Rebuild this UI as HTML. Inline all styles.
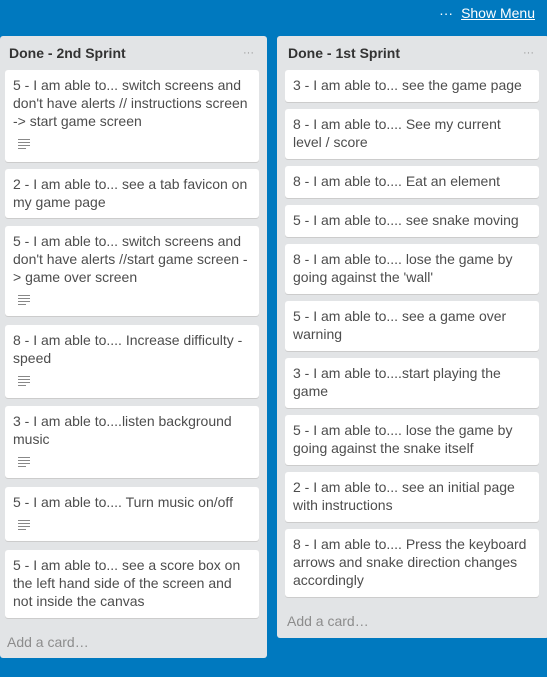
<!DOCTYPE html>
<html><head><meta charset="utf-8"><style>
body{margin:0;width:547px;height:677px;background:#0079bf;font-family:"Liberation Sans",Arial,sans-serif;position:relative;overflow:hidden}
.list{position:absolute;background:#e2e4e6;border-radius:3px}
.h{position:absolute;top:45px;font-weight:bold;font-size:14px;color:#333}
.dots{position:absolute;top:47px;color:#999;font-size:11px;letter-spacing:0}
.c{position:absolute;background:#fff;border-radius:3px;box-shadow:0 1px 0 #ccc;font-size:14px;line-height:18px;color:#4d4d4d;padding:6px 8px 0 8px;box-sizing:border-box}
.ic{display:block;margin:9px 0 0 5px;width:12px}
.ic i{display:block;height:1px;background:#888;margin-bottom:2px}
.add{position:absolute;color:#8c8c8c;font-size:14px}
</style></head><body>
<div style="position:absolute;right:12px;top:5px;color:#fff;font-size:14px"><span style="margin-right:8px">···</span><u>Show Menu</u></div>
<div class="list" style="left:0;top:36px;width:267px;height:622px"></div>
<div class="list" style="left:277px;top:36px;width:272px;height:602px"></div>
<div class="h" style="left:9px">Done - 2nd Sprint</div>
<div class="dots" style="left:243px">···</div>
<div class="h" style="left:288px">Done - 1st Sprint</div>
<div class="dots" style="left:523px">···</div>

<div class="c" style="left:5px;top:70px;width:254px;height:92px">5 - I am able to... switch screens and don't have alerts // instructions screen -&gt; start game screen<span class="ic"><i></i><i></i><i></i><i style="width:8px"></i></span></div>
<div class="c" style="left:5px;top:169px;width:254px;height:49px">2 - I am able to... see a tab favicon on my game page</div>
<div class="c" style="left:5px;top:226px;width:254px;height:90px">5 - I am able to... switch screens and don't have alerts //start game screen -&gt; game over screen<span class="ic"><i></i><i></i><i></i><i style="width:8px"></i></span></div>
<div class="c" style="left:5px;top:325px;width:254px;height:73px">8 - I am able to.... Increase difficulty - speed<span class="ic"><i></i><i></i><i></i><i style="width:8px"></i></span></div>
<div class="c" style="left:5px;top:406px;width:254px;height:72px">3 - I am able to....listen background music<span class="ic"><i></i><i></i><i></i><i style="width:8px"></i></span></div>
<div class="c" style="left:5px;top:487px;width:254px;height:54px">5 - I am able to.... Turn music on/off<span class="ic"><i></i><i></i><i></i><i style="width:8px"></i></span></div>
<div class="c" style="left:5px;top:550px;width:254px;height:68px">5 - I am able to... see a score box on the left hand side of the screen and not inside the canvas</div>
<div class="add" style="left:7px;top:634px">Add a card…</div>

<div class="c" style="left:285px;top:70px;width:254px;height:32px">3 - I am able to... see the game page</div>
<div class="c" style="left:285px;top:109px;width:254px;height:50px">8 - I am able to.... See my current level / score</div>
<div class="c" style="left:285px;top:166px;width:254px;height:32px">8 - I am able to.... Eat an element</div>
<div class="c" style="left:285px;top:205px;width:254px;height:32px">5 - I am able to.... see snake moving</div>
<div class="c" style="left:285px;top:244px;width:254px;height:50px">8 - I am able to.... lose the game by going against the 'wall'</div>
<div class="c" style="left:285px;top:301px;width:254px;height:50px">5 - I am able to... see a game over warning</div>
<div class="c" style="left:285px;top:358px;width:254px;height:50px">3 - I am able to....start playing the game</div>
<div class="c" style="left:285px;top:415px;width:254px;height:50px">5 - I am able to.... lose the game by going against the snake itself</div>
<div class="c" style="left:285px;top:472px;width:254px;height:50px">2 - I am able to... see an initial page with instructions</div>
<div class="c" style="left:285px;top:529px;width:254px;height:68px">8 - I am able to.... Press the keyboard arrows and snake direction changes accordingly</div>
<div class="add" style="left:287px;top:613px">Add a card…</div>
</body></html>
